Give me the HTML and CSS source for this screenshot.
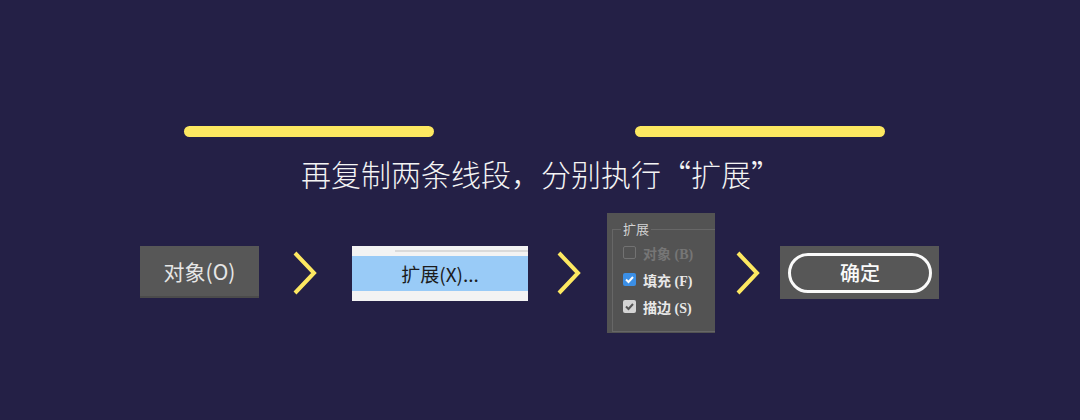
FILE: index.html
```html
<!DOCTYPE html>
<html lang="zh-CN">
<head>
  <meta charset="UTF-8" />
  <meta name="viewport" content="width=device-width, initial-scale=1.0"/>
  <title>扩展线段</title>
  <link rel="stylesheet" href="styles.css">
</head>
<body>

  <div class="slide">
    <div class="bars">
      <span class="bar"></span>
      <span class="bar"></span>
    </div>

    <h1 class="title">再复制两条线段，分别执行“扩展”</h1>

    <div class="steps">
      <div class="menu-item">对象(O)</div>

      <svg class="arrow" width="26" height="44" viewBox="0 0 26 44">
        <polyline points="2,2 21,22 2,42" />
      </svg>

      <div class="submenu">
        <div class="submenu-rule"></div>
        <div class="submenu-hover">扩展(X)...</div>
      </div>

      <svg class="arrow arrow-2" width="26" height="44" viewBox="0 0 26 44">
        <polyline points="2,2 21,22 2,42" />
      </svg>

      <div class="dialog">
        <fieldset class="group">
          <legend>扩展</legend>
          <div class="check disabled"><span class="box"></span>对象 (B)</div>
          <div class="check"><span class="box box-on">
            <svg width="13" height="13" viewBox="0 0 13 13"><polyline points="3,6.5 5.5,9 10,4" /></svg>
          </span>填充 (F)</div>
          <div class="check"><span class="box box-grey">
            <svg width="13" height="13" viewBox="0 0 13 13"><polyline points="3,6.5 5.5,9 10,4" /></svg>
          </span>描边 (S)</div>
        </fieldset>
      </div>

      <svg class="arrow arrow-3" width="26" height="44" viewBox="0 0 26 44">
        <polyline points="2,2 21,22 2,42" />
      </svg>

      <div class="ok-wrap">
        <div class="ok-btn">确定</div>
      </div>
    </div>
  </div>

</body>
</html>
```

FILE: styles.css
```css
* {
  box-sizing: border-box;
}

body {
  margin: 0;
  padding: 0;
  width: 1080px;
  height: 420px;
  overflow: hidden;
  background: #242046;
  font-family: "Noto Sans CJK SC", sans-serif;
}

.slide {
  padding-top: 126px;
}

.bars {
  display: flex;
  padding-left: 184px;
  gap: 201px;
}

.bar {
  display: block;
  width: 250px;
  height: 11px;
  border-radius: 6px;
  background: #fde861;
}

.title {
  margin: 16px 0 0;
  font-size: 30px;
  font-weight: 300;
  line-height: 40px;
  color: #f4f4f4;
  text-align: center;
  padding-left: 2px;
}

.steps {
  display: flex;
  align-items: center;
  margin-top: 20px;
  padding-left: 140px;
}

/* step 1 */
.menu-item {
  width: 119px;
  height: 52px;
  margin-top: -2px;
  background: #575757;
  border-bottom: 2px solid #4b4b4b;
  color: #e6e6e6;
  font-size: 21px;
  line-height: 50px;
  text-align: center;
}

.arrow {
  margin: 0 33px 0 34px;
}

.arrow polyline {
  fill: none;
  stroke: #fde861;
  stroke-width: 4;
}

.arrow-2 {
  margin: 0 24px 0 29px;
}

.arrow-3 {
  margin: 0 18px 0 21px;
}

/* step 2 */
.submenu {
  width: 176px;
  height: 55px;
  background: #f3f3f3;
  padding-top: 4px;
}

.submenu-rule {
  height: 2px;
  margin-left: 43px;
  background: #dadada;
}

.submenu-hover {
  margin-top: 4px;
  height: 35px;
  background: #99cbf7;
  color: #1c1c1c;
  font-size: 19px;
  line-height: 35px;
  text-align: center;
}

/* step 3 */
.dialog {
  width: 108px;
  height: 120px;
  background: #535353;
  overflow: hidden;
  padding: 8px 0 0 5px;
}

.group {
  margin: 0;
  width: 130px;
  height: 111px;
  border: 1px solid #676767;
  padding: 2px 0 0 10px;
}

.group legend {
  margin-left: -2px;
  padding: 0 2px;
  font-size: 13px;
  line-height: 16px;
  color: #d2d2d2;
}

.check {
  display: flex;
  align-items: center;
  height: 27px;
  font-family: "Liberation Serif", "Noto Sans CJK SC", serif;
  font-weight: bold;
  font-size: 14px;
  color: #e8e8e8;
}

.check.disabled {
  color: #767676;
}

.box {
  display: flex;
  width: 13px;
  height: 13px;
  margin-right: 7px;
  border-radius: 2px;
}

.disabled .box {
  border: 1px solid #727272;
}

.box-on {
  background: #3b8fe6;
}

.box-grey {
  background: #d4d4d4;
}

.box polyline {
  fill: none;
  stroke: #fff;
  stroke-width: 2;
}

.box-grey polyline {
  stroke: #555;
}

/* step 4 */
.ok-wrap {
  width: 159px;
  height: 53px;
  margin-top: -1px;
  background: #575757;
  padding: 7px 8px 0;
}

.ok-btn {
  width: 144px;
  height: 40px;
  border: 3px solid #fafafa;
  border-radius: 20px;
  color: #fafafa;
  font-size: 20px;
  font-weight: 500;
  line-height: 34px;
  text-align: center;
}
```
